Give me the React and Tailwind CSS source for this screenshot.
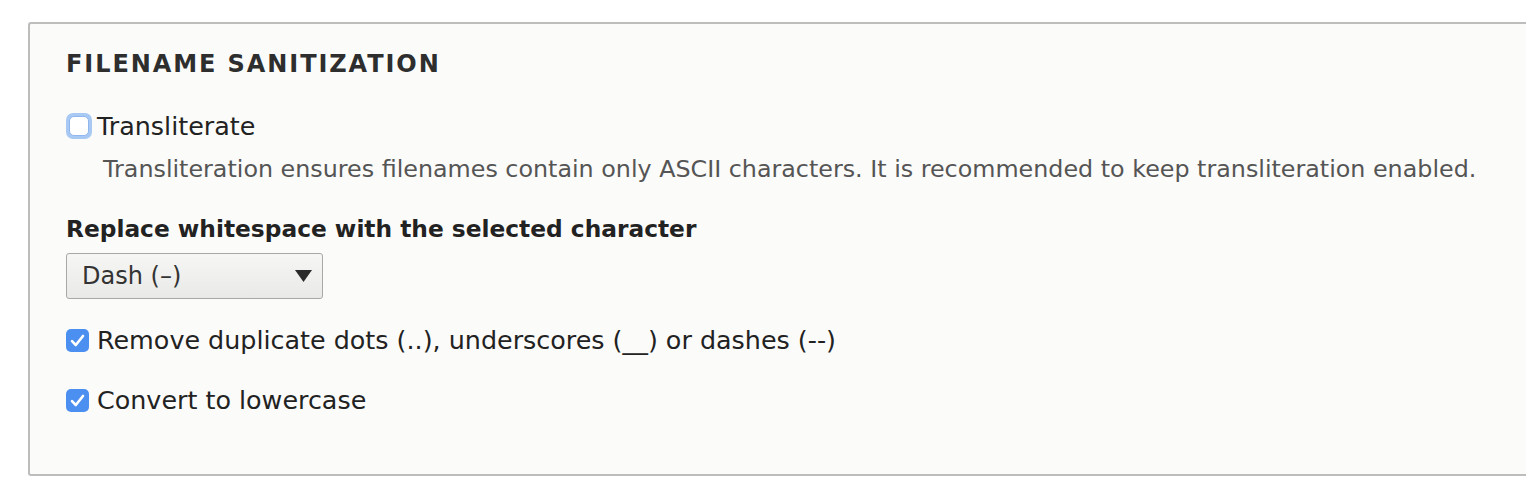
import React from "react";

function Check({ checked }) {
  if (checked) {
    return (
      <span className="flex h-[23px] w-[23px] shrink-0 items-center justify-center rounded-[5px] bg-[#4b8ff0]">
        <svg width="15" height="13" viewBox="0 0 15 13" fill="none">
          <path d="M2 7.2 L5.8 11 L13 2" stroke="white" strokeWidth="2.6" strokeLinecap="round" strokeLinejoin="round" />
        </svg>
      </span>
    );
  }
  return (
    <span className="flex h-[26px] w-[26px] shrink-0 items-center justify-center rounded-[7px] bg-[#a9c9f5]">
      <span className="h-[20px] w-[20px] rounded-[5px] bg-white border border-[#8fb6ee]" />
    </span>
  );
}

export default function App() {
  return (
    <div className="h-[492px] w-[1526px] overflow-hidden bg-white pl-[28px] pt-[22px]" style={{ fontFamily: '"DejaVu Sans", "Liberation Sans", sans-serif' }}>
      <div className="h-[454px] rounded-tl-[3px] rounded-bl-[3px] border-2 border-r-0 border-[#bdbdbb] bg-[#fbfbf9] pl-[36px] pt-[24px] text-[#333]">
        <h2 className="text-[24px] font-bold uppercase leading-[32px] tracking-[0.08em] text-[#2e2e2e]">
          Filename sanitization
        </h2>
        <div className="mt-[31px] flex items-center gap-[5px]">
          <Check checked={false} />
          <span className="text-[25.4px] leading-[30px] text-[#222]">Transliterate</span>
        </div>
        <p className="mt-[13px] pl-[37px] text-[23.8px] leading-[30px] text-[#555]">
          Transliteration ensures filenames contain only ASCII characters. It is recommended to keep transliteration enabled.
        </p>
        <div className="mt-[30px] text-[23.3px] font-bold leading-[30px] text-[#222]">
          Replace whitespace with the selected character
        </div>
        <div className="mt-[9px] flex h-[46px] w-[257px] items-center justify-between rounded-[3px] border border-[#a8a8a6] bg-gradient-to-b from-[#f6f6f4] to-[#e9e9e7] pl-[15px] pr-[10px]">
          <span className="text-[24px] text-[#333]">Dash (–)</span>
          <svg width="17" height="12" viewBox="0 0 17 12">
            <path d="M0 0 H17 L8.5 12 Z" fill="#2a2a2a" />
          </svg>
        </div>
        <div className="mt-[26px] flex items-center gap-[8px]">
          <Check checked />
          <span className="text-[25.4px] leading-[30px] text-[#222]">Remove duplicate dots (..), underscores (__) or dashes (--)</span>
        </div>
        <div className="mt-[30px] flex items-center gap-[8px]">
          <Check checked />
          <span className="text-[25.4px] leading-[30px] text-[#222]">Convert to lowercase</span>
        </div>
      </div>
    </div>
  );
}
